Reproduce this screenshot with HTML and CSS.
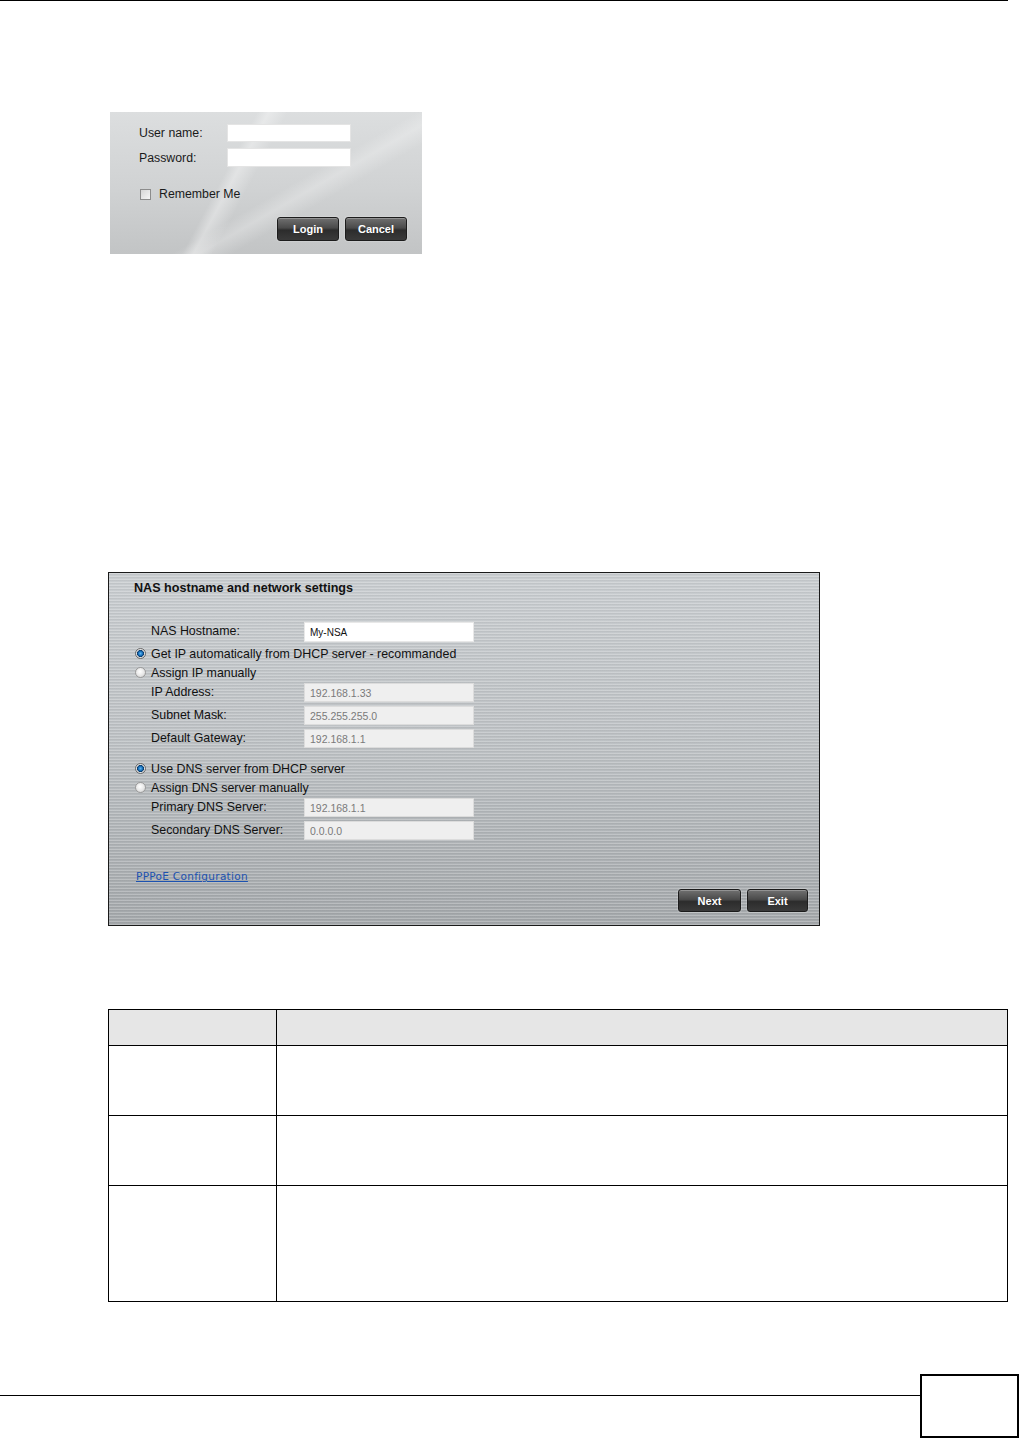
FILE: index.html
```html
<!DOCTYPE html>
<html lang="en">
<head>
  <meta charset="UTF-8" />
  <title>NAS setup</title>
  <link rel="stylesheet" href="styles.css">
</head>
<body>
  <div class="page-rule"></div>

  <!-- login box -->
  <div class="login">
    <div class="login-grid">
      <label>User name:</label>
      <input type="text" class="login-input" />
      <label>Password:</label>
      <input type="password" class="login-input tall" />
    </div>
    <div class="remember">
      <span class="checkbox"></span>
      <span>Remember Me</span>
    </div>
    <div class="login-actions">
      <button class="dark-btn login-btn">Login</button>
      <button class="dark-btn login-btn">Cancel</button>
    </div>
  </div>

  <!-- network settings panel -->
  <div class="nas-panel">
    <div class="nas-title">NAS hostname and network settings</div>

    <div class="field host-row">
      <span class="field-label">NAS Hostname:</span>
      <input type="text" class="nas-input host-input" value="My-NSA" />
    </div>

    <div class="radio-row first">
      <span class="radio checked"></span>
      <span>Get IP automatically from DHCP server - recommanded</span>
    </div>
    <div class="radio-row">
      <span class="radio"></span>
      <span>Assign IP manually</span>
    </div>
    <div class="field">
      <span class="field-label">IP Address:</span>
      <input type="text" class="nas-input" value="192.168.1.33" disabled />
    </div>
    <div class="field">
      <span class="field-label">Subnet Mask:</span>
      <input type="text" class="nas-input" value="255.255.255.0" disabled />
    </div>
    <div class="field">
      <span class="field-label">Default Gateway:</span>
      <input type="text" class="nas-input" value="192.168.1.1" disabled />
    </div>

    <div class="radio-row dns-first">
      <span class="radio checked"></span>
      <span>Use DNS server from DHCP server</span>
    </div>
    <div class="radio-row">
      <span class="radio"></span>
      <span>Assign DNS server manually</span>
    </div>
    <div class="field">
      <span class="field-label">Primary DNS Server:</span>
      <input type="text" class="nas-input" value="192.168.1.1" disabled />
    </div>
    <div class="field">
      <span class="field-label">Secondary DNS Server:</span>
      <input type="text" class="nas-input" value="0.0.0.0" disabled />
    </div>

    <div class="pppoe-row"><a href="#" class="pppoe-link">PPPoE Configuration</a></div>

    <div class="nas-actions">
      <button class="dark-btn next-btn">Next</button>
      <button class="dark-btn exit-btn">Exit</button>
    </div>
  </div>

  <!-- field table -->
  <table class="desc-table">
    <tr class="head-row"><th class="col-label"></th><th></th></tr>
    <tr class="row-short"><td></td><td></td></tr>
    <tr class="row-short"><td></td><td></td></tr>
    <tr class="row-tall"><td></td><td></td></tr>
  </table>

  <div class="page-footer">
    <div class="footer-rule"></div>
    <div class="page-box"></div>
  </div>
</body>
</html>
```

FILE: styles.css
```css
* { box-sizing: border-box; }
body {
  margin: 0;
  font-family: "Liberation Sans", Arial, sans-serif;
  color: #111;
  background: #fff;
}
.page-rule {
  width: 1008px;
  height: 1px;
  background: #000;
}

/* login box */
.login {
  margin: 111px 0 0 110px;
  width: 312px;
  padding: 12px 15px 13px 29px;
  background:
    linear-gradient(118deg, transparent 0 38%, rgba(255,255,255,0.35) 41%, transparent 46%),
    linear-gradient(150deg, transparent 0 55%, rgba(255,255,255,0.25) 60%, transparent 66%),
    linear-gradient(to bottom, #dcdedf 0%, #d0d2d3 55%, #c2c4c5 100%);
}
.login-grid {
  display: grid;
  grid-template-columns: 88px 124px;
  grid-template-rows: 18px 19px;
  row-gap: 6px;
  align-items: center;
  font-size: 12.3px;
}
.login-grid label { color: #1a1a1a; }
.login-input {
  width: 124px;
  height: 18px;
  border: 1px solid #e4e4e4;
  background: #fff;
  padding: 0;
}
.login-input.tall { height: 19px; }
.remember {
  display: flex;
  align-items: center;
  gap: 8px;
  margin-top: 21px;
  height: 12px;
  padding-left: 1px;
  font-size: 12.3px;
  color: #1a1a1a;
}
.checkbox {
  width: 11px;
  height: 11px;
  border: 1px solid #8c8c8c;
  background: linear-gradient(135deg, #d6d6d6, #f6f6f6);
}
.login-actions {
  display: flex;
  justify-content: flex-end;
  gap: 6px;
  margin-top: 17px;
}
.dark-btn {
  height: 24px;
  padding: 0;
  border: 1px solid #1c1c1c;
  border-radius: 3px;
  background: linear-gradient(to bottom, #707070 0%, #4a4a4a 45%, #2c2c2c 55%, #3a3a3a 100%);
  box-shadow: inset 0 1px 0 rgba(255,255,255,0.25), 0 0 0 1px rgba(255,255,255,0.15);
  color: #fff;
  font-family: "Liberation Sans", Arial, sans-serif;
  font-weight: bold;
  font-size: 11px;
}
.login-btn { width: 62px; }

/* network panel */
.nas-panel {
  margin: 318px 0 0 108px;
  width: 712px;
  border: 1px solid #1a1a1a;
  padding: 7px 11px 13px 0;
  font-size: 12.4px;
  background:
    repeating-linear-gradient(to bottom, rgba(255,255,255,0.22) 0 1px, rgba(0,0,0,0.04) 1px 2px, transparent 2px 3px),
    linear-gradient(to bottom, #c9cdd0 0%, #bcc0c3 50%, #a3a7aa 100%);
}
.nas-title {
  height: 16px;
  line-height: 16px;
  padding-left: 25px;
  font-weight: bold;
  font-size: 12.6px;
  color: #111;
}
.field {
  display: flex;
  align-items: flex-start;
  height: 23px;
  padding: 1px 0 0 42px;
}
.field-label {
  width: 153px;
  line-height: 19px;
  color: #111;
}
.host-row {
  margin-top: 25px;
  height: 22px;
  padding-top: 1px;
}
.nas-input {
  width: 170px;
  height: 19px;
  border: 1px solid #dcdcdc;
  background: #efefef;
  padding: 0 5px;
  font-family: "Liberation Sans", Arial, sans-serif;
  font-size: 10.5px;
  color: #7a7a7a;
}
.host-input {
  height: 20px;
  background: #fff;
  border-color: #e8e8e8;
  color: #111;
  font-size: 10px;
}
.radio-row {
  display: flex;
  align-items: center;
  gap: 5px;
  height: 19px;
  padding-left: 26px;
  color: #111;
}
.radio-row.first { margin-top: 1px; }
.radio-row.dns-first { margin-top: 8px; }
.radio {
  width: 11px;
  height: 11px;
  border-radius: 50%;
  border: 1px solid #9a9a9a;
  background: radial-gradient(circle at 45% 40%, #ffffff 0, #e4e4e4 60%, #c4c4c4 100%);
}
.radio.checked {
  border-color: #6a6a6a;
  background: radial-gradient(circle at 50% 50%, #5fb6f0 0, #1a74c0 2px, #0b3b6a 3.2px, #e6e6e6 3.8px, #c8c8c8 100%);
}
.pppoe-row {
  margin-top: 25px;
  height: 16px;
  line-height: 16px;
  padding-left: 27px;
}
.pppoe-link {
  font-family: "DejaVu Sans", sans-serif;
  font-size: 10.5px;
  letter-spacing: 0.3px;
  color: #1c52b0;
}
.nas-actions {
  display: flex;
  justify-content: flex-end;
  gap: 6px;
  margin-top: 5px;
}
.nas-actions .dark-btn { height: 23px; }
.next-btn { width: 63px; }
.exit-btn { width: 61px; }

/* table */
.desc-table {
  margin: 83px 0 0 108px;
  width: 900px;
  border-collapse: collapse;
}
.desc-table th,
.desc-table td {
  border: 1px solid #000;
  padding: 0;
}
.desc-table .col-label { width: 168px; }
.head-row { height: 36px; background: #e6e6e6; }
.row-short { height: 70px; }
.row-tall { height: 116px; }

/* footer */
.page-footer {
  display: flex;
  align-items: flex-start;
  margin-top: 72px;
}
.footer-rule {
  flex: 1;
  height: 1px;
  margin-top: 21px;
  background: #000;
}
.page-box {
  width: 99px;
  height: 64px;
  border: 2px solid #000;
  margin-right: 1px;
}
```
